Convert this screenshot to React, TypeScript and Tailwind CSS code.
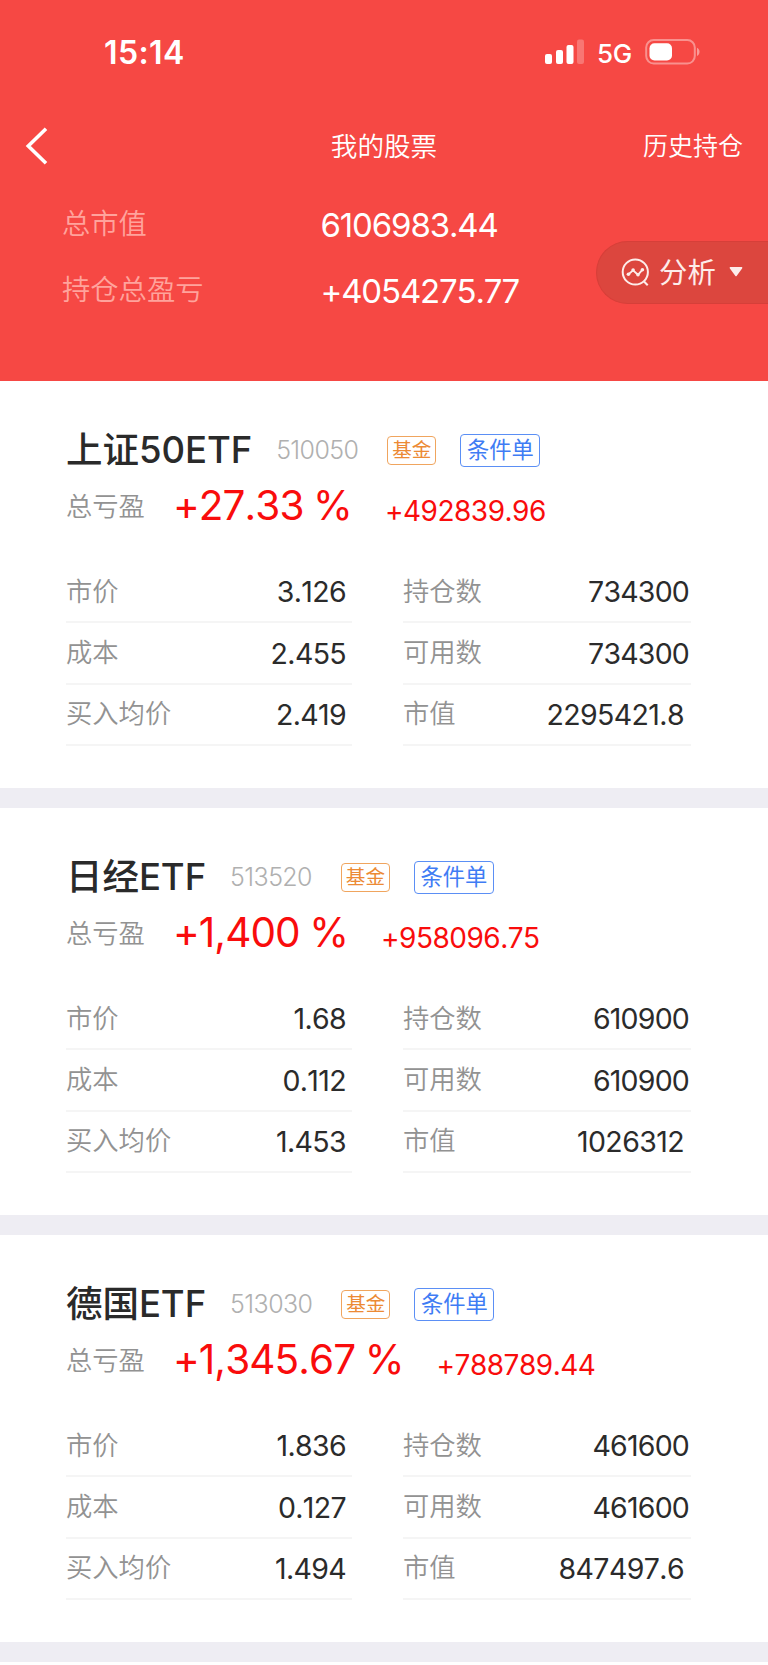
type Holding = {
  name: string;
  code: string;
  percent: string;
  amount: string;
  left: [string, string][];
  right: [string, string][];
};

const holdings: Holding[] = [
  {
    name: "上证50ETF",
    code: "510050",
    percent: "+27.33 %",
    amount: "+492839.96",
    left: [["市价", "3.126"], ["成本", "2.455"], ["买入均价", "2.419"]],
    right: [["持仓数", "734300"], ["可用数", "734300"], ["市值", "2295421.8"]],
  },
  {
    name: "日经ETF",
    code: "513520",
    percent: "+1,400 %",
    amount: "+958096.75",
    left: [["市价", "1.68"], ["成本", "0.112"], ["买入均价", "1.453"]],
    right: [["持仓数", "610900"], ["可用数", "610900"], ["市值", "1026312"]],
  },
  {
    name: "德国ETF",
    code: "513030",
    percent: "+1,345.67 %",
    amount: "+788789.44",
    left: [["市价", "1.836"], ["成本", "0.127"], ["买入均价", "1.494"]],
    right: [["持仓数", "461600"], ["可用数", "461600"], ["市值", "847497.6"]],
  },
];

function StatusBar() {
  return (
    <div className="flex h-[104px] items-start pt-[36px] pl-[104px]">
      <div className="w-[441px] text-[32px] leading-[34px] font-semibold tracking-[0.4px]">15:14</div>
      <svg width="40" height="26" viewBox="0 0 40 26" fill="#fff" className="mt-[3px]">
        <rect x="0" y="15" width="7" height="10" rx="2" />
        <rect x="11" y="11" width="7" height="14" rx="2" />
        <rect x="21.5" y="6" width="7" height="19" rx="2" />
        <rect x="32" y="0.5" width="7" height="24.5" rx="2" opacity="0.25" />
      </svg>
      <div className="ml-[12px] w-[48px] text-[26px] leading-[35px] font-[450] tracking-[-0.3px]">5G</div>
      <svg width="56" height="26" viewBox="0 0 56 26" className="mt-[3px]">
        <rect x="1.2" y="1" width="48.6" height="23.6" rx="7.5" fill="none" stroke="#fff" strokeOpacity="0.4" strokeWidth="2" />
        <rect x="4.5" y="4.3" width="22.5" height="17.2" rx="5" fill="#fff" />
        <path d="M52 8.7c3.4 1.6 3.4 6.6 0 8.2z" fill="#fff" fillOpacity="0.45" />
      </svg>
    </div>
  );
}

function NavBar() {
  return (
    <div className="flex h-[84px] items-center justify-between pr-[25px] pl-[25px]">
      <svg width="24" height="38" viewBox="0 0 24 38" fill="none" stroke="#fff" strokeWidth="3.6" className="mr-[76px]">
        <path d="M21 1.8 3.3 19 21 36.2" />
      </svg>
      <div className="text-[26.6px] leading-[32px] font-[350]">我的股票</div>
      <div className="text-[25px] leading-[32px] font-[350]">历史持仓</div>
    </div>
  );
}

function AnalysisButton() {
  return (
    <div className="absolute top-[241px] right-0 flex h-[63px] w-[172px] items-center rounded-l-full border border-r-0 border-[#d63f39] bg-[#dc463e] pl-[24px]">
      <svg width="30" height="30" viewBox="0 0 30 30" fill="none" stroke="#fdecea" strokeWidth="2">
        <circle cx="14.3" cy="14" r="12.6" />
        <path d="m22.8 23.2 3.9 4" />
        <path d="m7.5 16.3 4.6-3.9 4.9 4.4 4.5-5.1" strokeWidth="1.9" />
        <g fill="#fdecea" stroke="none">
          <circle cx="7.4" cy="16.3" r="1.8" />
          <circle cx="12.1" cy="12.1" r="1.8" />
          <circle cx="17" cy="16.8" r="1.8" />
          <circle cx="21.4" cy="11.8" r="1.8" />
        </g>
      </svg>
      <div className="ml-[8px] text-[28.4px] leading-[36px] text-[#fdecea]">分析</div>
      <svg width="14" height="10" viewBox="0 0 14 10" fill="#fdecea" className="ml-[13px] -mt-px">
        <path d="M1.5 0h11a.8.8 0 0 1 .6 1.4L7.6 9a.8.8 0 0 1-1.2 0L.9 1.4A.8.8 0 0 1 1.5 0z" />
      </svg>
    </div>
  );
}

function SummaryRow({ label, value }: { label: string; value: string }) {
  return (
    <div className="flex h-[66px] items-center pl-[62px]">
      <div className="w-[258.5px] pt-[5px] text-[28.3px] leading-[40px] font-[350] text-[#ffa39c]">{label}</div>
      <div className="pt-[7px] text-[33px] leading-[40px] font-[380] tracking-[-1.15px]">{value}</div>
    </div>
  );
}

function Column({ rows }: { rows: [string, string][] }) {
  return (
    <div>
      {rows.map(([label, value]) => (
        <div key={label} className="flex h-[61.4px] items-center justify-between border-b-2 border-[#f5f5f5]">
          <span className="text-[26.3px] leading-[40px] font-[350] text-[#929292]">{label}</span>
          <span
            className={
              label === "市值"
                ? "pr-[7px] pt-px text-[28.5px] leading-[40px] font-[380] tracking-[-0.6px] text-[#2b2b2b]"
                : label.endsWith("数")
                  ? "pr-[2px] pt-px text-[28.5px] leading-[40px] font-[380] tracking-[-0.8px] text-[#2b2b2b]"
                  : "pr-[6px] pt-px text-[28.5px] leading-[40px] font-[380] tracking-[-0.65px] text-[#2b2b2b]"
            }
          >
            {value}
          </span>
        </div>
      ))}
    </div>
  );
}

function HoldingCard({ item }: { item: Holding }) {
  return (
    <section className="h-[427px] border-b-[20px] border-[#eeedf3] bg-white pt-[46px] pl-[66px]">
      <div className="flex h-[46px] items-center">
        <h2 className="text-[36.5px] leading-[44px] font-medium tracking-[-0.05px] text-[#2a2a2a]">{item.name}</h2>
        <span className="ml-[24px] text-[25px] leading-[44px] font-light tracking-[-0.6px] text-[#b0b0b0]">{item.code}</span>
        <span className="ml-[29px] flex h-[29px] w-[49px] items-center justify-center rounded-[4px] border border-[#f0a55e] text-[19.6px] leading-[26px] text-[#ec8a34]">
          基金
        </span>
        <span className="ml-[24px] flex h-[33px] w-[80px] items-center justify-center rounded-[4px] border-[1.5px] border-[#5b8ff5] text-[22.3px] leading-[30px] text-[#3f7cf4]">
          条件单
        </span>
      </div>
      <div className="flex h-[69px]">
        <span className="pt-[14px] text-[26.3px] leading-[40px] font-[350] text-[#929292]">总亏盈</span>
        <span className="ml-[28px] pt-[13px] text-[40.5px] leading-[40px] font-[380] tracking-[-0.9px] [word-spacing:-1px] text-[#f90c0c]">{item.percent}</span>
        <span className="ml-[33px] pt-[18px] text-[28px] leading-[40px] font-[380] tracking-[-0.5px] text-[#f90c0c]">{item.amount}</span>
      </div>
      <div className="mt-[20px] grid grid-cols-[286px_288px] gap-[51px]">
        <Column rows={item.left} />
        <Column rows={item.right} />
      </div>
    </section>
  );
}

export default function App() {
  return (
    <main className="h-[1665px] w-[768px] overflow-hidden bg-white font-['Inter','Noto_Sans_CJK_SC',sans-serif] [font-kerning:none] [font-feature-settings:'calt'_0] whitespace-nowrap">
      <header className="relative h-[381px] bg-[#f64844] text-white">
        <StatusBar />
        <NavBar />
        <SummaryRow label="总市值" value="6106983.44" />
        <SummaryRow label="持仓总盈亏" value="+4054275.77" />
        <AnalysisButton />
      </header>
      {holdings.map((item) => (
        <HoldingCard key={item.code} item={item} />
      ))}
    </main>
  );
}
